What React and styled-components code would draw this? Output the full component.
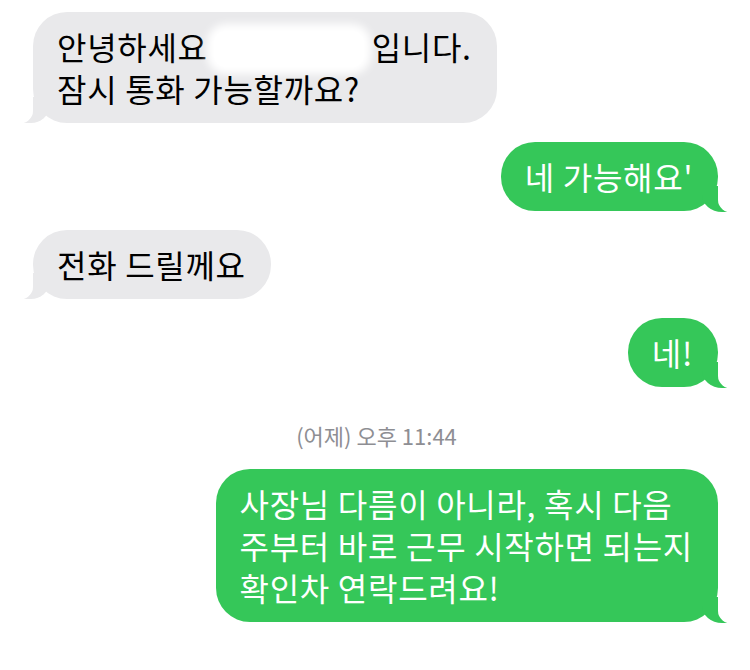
import styled, { createGlobalStyle, css } from "styled-components"

const GRAY = "#e9e9eb"
const GREEN = "#35c759"

const GlobalStyle = createGlobalStyle`
  html, body {
    margin: 0;
    padding: 0;
    background: #ffffff;
  }
  body {
    font-family: "Noto Sans CJK KR", "Noto Sans", sans-serif;
  }
`

const Thread = styled.div`
  display: flex;
  flex-direction: column;
  padding: 12px 32px 30px 33px;
  gap: 19px;
`

const Row = styled.div`
  display: flex;
  justify-content: ${(p) => (p.$out ? "flex-end" : "flex-start")};
`

const tailIn = css`
  &::before {
    content: "";
    position: absolute;
    bottom: 0;
    left: -10px;
    width: 26px;
    height: 26px;
    background: ${GRAY};
    border-bottom-right-radius: 18px 16px;
  }
  &::after {
    content: "";
    position: absolute;
    bottom: -1px;
    left: -32px;
    width: 32px;
    height: 28px;
    background: #ffffff;
    border-bottom-right-radius: 15px 13px;
  }
`

const tailOut = css`
  &::before {
    content: "";
    position: absolute;
    bottom: -1px;
    right: -14px;
    width: 30px;
    height: 26px;
    background: ${GREEN};
    border-bottom-left-radius: 20px 17px;
  }
  &::after {
    content: "";
    position: absolute;
    bottom: -2px;
    right: -34px;
    width: 34px;
    height: 29px;
    background: #ffffff;
    border-bottom-left-radius: 15px 13px;
  }
`

const Bubble = styled.div`
  position: relative;
  padding: 13px 25px 14px 24px;
  border-radius: 34px;
  font-size: 32px;
  line-height: 42px;
  letter-spacing: 0.7px;
  background: ${(p) => (p.$out ? GREEN : GRAY)};
  color: ${(p) => (p.$out ? "#ffffff" : "#000000")};
  ${(p) => (p.$out ? tailOut : tailIn)}
`

const Text = styled.span`
  position: relative;
  z-index: 1;
`

const Redacted = styled.span`
  display: inline-block;
  width: 150px;
  height: 36px;
  vertical-align: -7px;
  background: #ffffff;
  border-radius: 12px;
  box-shadow: 0 0 8px 7px #ffffff;
  margin: 0 8px 0 6px;
`

const Stamp = styled.div`
  align-self: center;
  margin: 14px 0 0 0;
  padding-left: 2px;
  font-size: 22px;
  line-height: 30px;
  color: #8e8e93;
`

export default function App() {
  return (
    <>
      <GlobalStyle />
      <Thread>
        <Row>
          <Bubble>
            <Text>
              안녕하세요<Redacted />입니다.
              <br />
              잠시 통화 가능할까요?
            </Text>
          </Bubble>
        </Row>
        <Row $out>
          <Bubble $out>
            <Text>네 가능해요'</Text>
          </Bubble>
        </Row>
        <Row>
          <Bubble>
            <Text>전화 드릴께요</Text>
          </Bubble>
        </Row>
        <Row $out>
          <Bubble $out>
            <Text>네!</Text>
          </Bubble>
        </Row>
        <Stamp>(어제) 오후 11:44</Stamp>
        <Row $out>
          <Bubble $out>
            <Text>
              사장님 다름이 아니라, 혹시 다음
              <br />
              주부터 바로 근무 시작하면 되는지
              <br />
              확인차 연락드려요!
            </Text>
          </Bubble>
        </Row>
      </Thread>
    </>
  )
}
